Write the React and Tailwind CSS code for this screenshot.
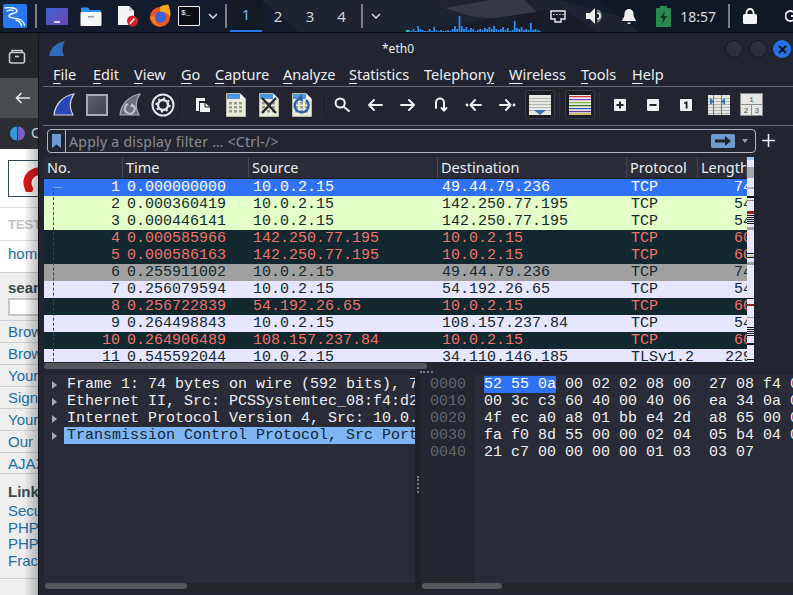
import React from "react";

const UI = { fontFamily: '"Noto Sans", "Open Sans", sans-serif' };

const rows = [
  ["1", "0.000000000", "10.0.2.15", "49.44.79.236", "TCP", "74", "s"],
  ["2", "0.000360419", "10.0.2.15", "142.250.77.195", "TCP", "54", "g"],
  ["3", "0.000446141", "10.0.2.15", "142.250.77.195", "TCP", "54", "g"],
  ["4", "0.000585966", "142.250.77.195", "10.0.2.15", "TCP", "60", "d"],
  ["5", "0.000586163", "142.250.77.195", "10.0.2.15", "TCP", "60", "d"],
  ["6", "0.255911002", "10.0.2.15", "49.44.79.236", "TCP", "74", "m"],
  ["7", "0.256079594", "10.0.2.15", "54.192.26.65", "TCP", "54", "l"],
  ["8", "0.256722839", "54.192.26.65", "10.0.2.15", "TCP", "60", "d"],
  ["9", "0.264498843", "10.0.2.15", "108.157.237.84", "TCP", "54", "l"],
  ["10", "0.264906489", "108.157.237.84", "10.0.2.15", "TCP", "60", "d"],
  ["11", "0.545592044", "10.0.2.15", "34.110.146.185", "TLSv1.2", "229", "l"],
];

const rowClass = {
  s: "bg-[#2f72f3] text-white",
  g: "bg-[#e4ffc7] text-[#12272e]",
  d: "bg-[#12272e] text-[#f0746c]",
  m: "bg-[#a0a0a0] text-[#12272e]",
  l: "bg-[#e7e6ff] text-[#12272e]",
};

const hex = [
  ["0000", "52 55 0a 00 02 02 08 00  27 08 f4 0"],
  ["0010", "00 3c c3 60 40 00 40 06  ea 34 0a 0"],
  ["0020", "4f ec a0 a8 01 bb e4 2d  a8 65 00 0"],
  ["0030", "fa f0 8d 55 00 00 02 04  05 b4 04 0"],
  ["0040", "21 c7 00 00 00 00 01 03  03 07"],
];

const details = [
  "Frame 1: 74 bytes on wire (592 bits), 7",
  "Ethernet II, Src: PCSSystemtec_08:f4:d2",
  "Internet Protocol Version 4, Src: 10.0.",
  "Transmission Control Protocol, Src Port",
];

const sideLinks = ["Brow", "Brow", "Your", "Sign", "Your", "Our g", "AJAX"];

function Fin({ w = 22, h = 23, fill = "#2a46b8", stroke = "#d5d8e0" }) {
  return (
    <svg width={w} height={h} viewBox="0 0 22 23">
      <path d="M1 22C2 12 9 3 21 1C17 7 16 15 20 22Z" fill={fill} stroke={stroke} strokeWidth="1.2" />
    </svg>
  );
}

function FileIcon({ children }) {
  return (
    <svg width="20" height="24" viewBox="0 0 20 24">
      <path d="M0.5 0.5H14L19.5 6V23.5H0.5Z" fill="#e9ecd8" stroke="#b9bba8" />
      <path d="M1 1H14V6H1Z" fill="#4f97dc" />
      <path d="M14 0.5V6H19.5Z" fill="#f4f6f8" />
      {[9, 13, 17].map((y) => (
        <g key={y} fill="#9a9c94">
          <rect x="3" y={y} width="3" height="2.5" />
          <rect x="8" y={y} width="3" height="2.5" />
          <rect x="13" y={y} width="3" height="2.5" />
        </g>
      ))}
      {children}
    </svg>
  );
}

function Arrow({ d, dot }) {
  return (
    <svg width="18" height="14" viewBox="0 0 18 14" fill="none" stroke="#eef0f2" strokeWidth="2" strokeLinecap="round" strokeLinejoin="round">
      <path d={d} />
      {dot && <circle cx={dot} cy="7" r="1.4" fill="#eef0f2" stroke="none" />}
    </svg>
  );
}

function Slot({ children, boxed }) {
  return (
    <div className="w-[33px] h-[33px] shrink-0 flex items-center justify-center">
      {boxed ? (
        <div className="w-[30px] h-[29px] flex items-center justify-center rounded-[3px] border border-[#3a3d47] bg-[#1b1e25]">{children}</div>
      ) : (
        children
      )}
    </div>
  );
}

function Sep() {
  return (
    <div className="w-[7px] h-[33px] shrink-0 flex justify-center items-center">
      <div className="w-px h-[24px] bg-[#2e313a]" />
    </div>
  );
}

function Key({ children }) {
  return (
    <div className="w-[12px] h-[12px] rounded-[1px] bg-[#eef0f2] flex items-center justify-center">
      <svg width="8" height="8" viewBox="0 0 8 8" fill="#20232c">{children}</svg>
    </div>
  );
}

function Menu() {
  const items = [
    ["F", "ile", 40, ""],
    ["E", "dit", 41, ""],
    ["V", "iew", 47, ""],
    ["G", "o", 34, ""],
    ["C", "apture", 68, ""],
    ["A", "nalyze", 66, ""],
    ["S", "tatistics", 75, ""],
    ["Telephon", "y", 85, "rev"],
    ["W", "ireless", 72, ""],
    ["T", "ools", 51, ""],
    ["H", "elp", 40, ""],
  ];
  return (
    <div className="h-[26px] shrink-0 flex items-center pl-[10px] ml-[4px] text-[14.5px] text-[#eceef0] border-b border-[#6a6c74]" style={UI}>
      {items.map(([a, b, w, rev]) => (
        <div key={a + b} className="shrink-0 leading-[20px] whitespace-nowrap" style={{ width: w }}>
          {rev ? (
            <>
              {a}
              <span className="underline underline-offset-[3px]">{b}</span>
            </>
          ) : (
            <>
              <span className="underline underline-offset-[3px]">{a}</span>
              {b}
            </>
          )}
        </div>
      ))}
    </div>
  );
}

function Toolbar() {
  return (
    <div className="h-[39px] shrink-0 flex items-center pl-[4px] ml-[4px] border-b border-[#6a6c74] pb-[3px]">
      <Slot><Fin /></Slot>
      <Slot>
        <div className="w-[22px] h-[22px] border-[2px] border-[#a9acb6] bg-gradient-to-br from-[#5a5d68] to-[#44474f]" />
      </Slot>
      <Slot>
        <svg width="22" height="23" viewBox="0 0 22 23">
          <path d="M1 22C2 12 9 3 21 1C17 7 16 15 20 22Z" fill="#6c6f78" stroke="#a9acb6" strokeWidth="1.2" />
          <path d="M9 11a5 5 0 1 0 6 2" fill="none" stroke="#c4c6cc" strokeWidth="2" />
          <path d="M13 10l3 4h-5z" fill="#c4c6cc" />
        </svg>
      </Slot>
      <Slot>
        <svg width="24" height="24" viewBox="0 0 24 24" fill="none">
          <circle cx="12" cy="12" r="10.5" stroke="#e4e6ea" strokeWidth="2" />
          <circle cx="12" cy="12" r="5" stroke="#e4e6ea" strokeWidth="2.4" />
          <circle cx="12" cy="12" r="6.8" stroke="#e4e6ea" strokeWidth="1.6" strokeDasharray="2.2 3.1" />
        </svg>
      </Slot>
      <Sep />
      <Slot>
        <svg width="16" height="16" viewBox="0 0 16 16">
          <path d="M1 1H10V4H4V14H1Z" fill="#eef0f2" />
          <path d="M5 6H10L15 10V15H5Z" fill="#eef0f2" />
          <path d="M10 6V10H15" fill="none" stroke="#20232c" />
        </svg>
      </Slot>
      <Slot><FileIcon /></Slot>
      <Slot>
        <FileIcon>
          <path d="M3 5L17 20M17 5L3 20" stroke="#25272c" strokeWidth="2.4" />
        </FileIcon>
      </Slot>
      <Slot>
        <FileIcon>
          <path d="M7 6a7 7 0 1 0 7 1" fill="none" stroke="#2c62a8" strokeWidth="2.4" />
          <path d="M10 1L5 6l6 3z" fill="#2c62a8" />
        </FileIcon>
      </Slot>
      <Sep />
      <Slot>
        <svg width="16" height="15" viewBox="0 0 16 15" fill="none" stroke="#eef0f2" strokeWidth="2" strokeLinecap="round">
          <circle cx="6.2" cy="6" r="4.6" />
          <path d="M10 10L15 14" />
        </svg>
      </Slot>
      <Slot><Arrow d="M16 7H3M8 2L3 7L8 12" /></Slot>
      <Slot><Arrow d="M2 7H15M10 2L15 7L10 12" /></Slot>
      <Slot>
        <svg width="14" height="15" viewBox="0 0 14 15" fill="none" stroke="#eef0f2" strokeWidth="2" strokeLinecap="round">
          <path d="M2 11V5.5a4 4 0 0 1 8 0V12" />
          <path d="M7.5 11L10 13.5L12.5 11" />
        </svg>
      </Slot>
      <Slot><Arrow d="M16 7H6M10 2L5.5 7L10 12" dot="2" /></Slot>
      <Slot><Arrow d="M2 7H12M8 2L12.5 7L8 12" dot="16" /></Slot>
      <Slot boxed>
        <svg width="22" height="20" viewBox="0 0 22 20">
          <rect width="22" height="20" fill="#e6e7e3" />
          {[3, 6, 9, 12, 15].map((y) => <rect key={y} y={y} width="22" height="1" fill="#b4b5b0" />)}
          <path d="M5 15H17L11 20Z" fill="#3670b5" />
        </svg>
      </Slot>
      <Sep />
      <Slot boxed>
        <svg width="22" height="20" viewBox="0 0 22 20">
          <rect width="22" height="20" fill="#e6e7e3" />
          <rect y="1" width="22" height="1.2" fill="#d43a3a" />
          <rect y="4" width="22" height="1.2" fill="#8a3ad0" />
          <rect y="7" width="22" height="1.2" fill="#7ac020" />
          <rect y="10" width="22" height="1.2" fill="#3a7a20" />
          <rect y="13" width="22" height="1.2" fill="#3a54c0" />
          <rect y="16" width="22" height="1.2" fill="#6a3aa0" />
          <rect y="18.4" width="22" height="1.2" fill="#d0a020" />
        </svg>
      </Slot>
      <Sep />
      <Slot><Key><path d="M3 0.5H5V3H7.5V5H5V7.5H3V5H0.5V3H3Z" /></Key></Slot>
      <Slot><Key><rect x="0.5" y="3" width="7" height="2" /></Key></Slot>
      <Slot><Key><path d="M2 1.5L4 0.5H5.5V7.5H3.7V2.5L2 3Z" /></Key></Slot>
      <Slot>
        <svg width="22" height="20" viewBox="0 0 22 20">
          <rect width="22" height="20" fill="#e6e7e3" />
          {[3, 6, 9, 12, 15, 18].map((y) => <rect key={y} y={y} width="22" height="1" fill="#b4b5b0" />)}
          <rect x="5" width="1" height="20" fill="#77797c" />
          <rect x="13" width="1" height="20" fill="#77797c" />
          <path d="M2 3L6 6.5L2 10ZM17 3L13 6.5L17 10Z" fill="#3670b5" />
        </svg>
      </Slot>
      <Slot>
        <svg width="23" height="23" viewBox="0 0 23 23">
          <rect x="0.5" y="0.5" width="22" height="22" fill="#e6e7e3" stroke="#8c8e92" />
          <path d="M0 11.5H23M11.5 11.5V23" stroke="#8c8e92" />
          <text x="11.5" y="9" fontSize="8" textAnchor="middle" fill="#55575b" fontFamily="Liberation Mono, monospace">1</text>
          <text x="6" y="20" fontSize="8" textAnchor="middle" fill="#55575b" fontFamily="Liberation Mono, monospace">2</text>
          <text x="17" y="20" fontSize="8" textAnchor="middle" fill="#55575b" fontFamily="Liberation Mono, monospace">3</text>
        </svg>
      </Slot>
    </div>
  );
}

function FilterBar() {
  return (
    <div className="h-[31px] shrink-0 flex items-start pl-[8px] pt-[3px]" style={UI}>
      <div className="w-[709px] h-[24px] border border-[#b4b6bc] rounded-[4px] flex items-center">
        <div className="w-[18px] h-full border-r border-[#b4b6bc] flex items-center justify-center">
          <svg width="9" height="14" viewBox="0 0 9 14"><path d="M0 0H9V14L4.5 10.5L0 14Z" fill="#6f9bd0" /></svg>
        </div>
        <div className="flex-1 pl-[3px] text-[14px] text-[#8a8c92] tracking-[0.3px] whitespace-nowrap">Apply a display filter … &lt;Ctrl-/&gt;</div>
        <div className="w-[24px] h-[14px] rounded-[2px] bg-[#6f9bd0] flex items-center justify-center">
          <svg width="16" height="10" viewBox="0 0 16 10"><path d="M0 3.5H10V0L16 5L10 10V6.5H0Z" fill="#20242e" /></svg>
        </div>
        <div className="w-[20px] flex justify-center">
          <div className="w-0 h-0 border-x-[3px] border-x-transparent border-t-[4px] border-t-[#9a9ca2]" />
        </div>
      </div>
      <svg className="ml-[6px] mt-[5px]" width="13" height="13" viewBox="0 0 13 13"><path d="M6.5 0V13M0 6.5H13" stroke="#e8eaee" strokeWidth="1.6" /></svg>
    </div>
  );
}

const Cols = "grid grid-cols-[79px_126px_189px_189px_71px_49px]";

function PacketTable() {
  const marks = [
    [0, 3, "#9cc6ee"], [10, 11, "#a8a8a8"], [30, 2, "#b5b5c0"], [39, 2, "#101010"], [43, 1, "#8a8a8a"],
    [54, 3, "#a02020"], [58, 1, "#101010"], [60, 1, "#101010"], [62, 1, "#101010"], [64, 1, "#101010"],
    [66, 1, "#101010"], [70, 3, "#a0a0a0"], [96, 1, "#101010"], [98, 2, "#c8d8a0"], [100, 1, "#101010"],
    [105, 3, "#a0a0a0"], [141, 1, "#101010"], [147, 2, "#a02020"], [160, 1, "#a0a0a0"], [170, 1, "#101010"],
    [172, 1, "#101010"], [174, 1, "#101010"], [176, 1, "#101010"], [178, 1, "#101010"], [186, 2, "#101010"],
    [202, 1, "#101010"],
  ];
  return (
    <div className="flex h-[205px] shrink-0 ml-[5px]">
      <div className="w-[703px] overflow-hidden shrink-0">
        <div className={`${Cols} h-[22px] bg-[#2a2d37] text-[14.5px] text-[#eceef0] border-b border-[#1a1c22]`} style={UI}>
          {["No.", "Time", "Source", "Destination", "Protocol", "Length"].map((h) => (
            <div key={h} className="pl-[3px] leading-[21px] border-r border-[#454852] overflow-hidden whitespace-nowrap">{h}</div>
          ))}
        </div>
        <div className="relative text-[15px] leading-[17px]" style={{ fontFamily: '"Liberation Mono", monospace' }}>
          {rows.map((r) => (
            <div key={r[0]} className={`${Cols} h-[17px] whitespace-pre ${rowClass[r[6]]}`}>
              <div className="text-right pr-[3px]">{r[0]}</div>
              <div className="pl-[4px]">{r[1]}</div>
              <div className="pl-[4px]">{r[2]}</div>
              <div className="pl-[4px]">{r[3]}</div>
              <div className="pl-[4px]">{r[4]}</div>
              <div className="overflow-hidden flex justify-end"><span className="-mr-[5px]">{r[5]}</span></div>
            </div>
          ))}
          <div className="absolute left-[9px] top-[8px] bottom-0 w-px border-l border-dashed border-[#444]" />
          <div className="absolute left-[9px] top-[8px] w-[9px] h-px bg-[#8a9cc0]" />
        </div>
      </div>
      <div className="relative w-[7px] shrink-0 bg-[#e7e6ff] overflow-hidden">
        {marks.map(([y, h, c], i) => (
          <div key={i} className="absolute left-0 w-full" style={{ top: y, height: h, backgroundColor: c }} />
        ))}
      </div>
    </div>
  );
}

function Panes() {
  const mono = { fontFamily: '"Liberation Mono", monospace' };
  return (
    <div className="flex-1 flex flex-col min-h-0 pb-[5px]">
      <div className="h-[13px] shrink-0 relative mx-[5px] pt-[1px]">
        <div className="w-[383px] h-[6px] rounded-[3px] bg-[#55575d]" />
        <div className="absolute left-[376px] top-[9px] w-[13px] border-t-2 border-dotted border-[#7a7c82]" />
      </div>
      <div className="flex-1 flex min-h-0 ml-[5px] bg-[#292b36] text-[15px] leading-[17px] text-[#eef0f2]" style={mono}>
        <div className="w-[371px] shrink-0 flex flex-col overflow-hidden">
          <div className="flex-1 flex min-h-0">
            <div className="w-[20px] shrink-0 flex flex-col pt-[1px]">
              {details.map((d) => (
                <div key={d} className="h-[17px] flex items-center justify-center pl-[1px]">
                  <div className="w-0 h-0 border-y-[4px] border-y-transparent border-l-[5px] border-l-[#a8aab0]" />
                </div>
              ))}
            </div>
            <div className="flex-1 overflow-hidden pt-[1px]">
              {details.map((d, i) => (
                <div key={d} className={`h-[17px] pl-[3px] whitespace-pre ${i === 3 ? "bg-[#7fb5f5] text-[#12272e]" : ""}`}>{d}</div>
              ))}
            </div>
          </div>
          <div className="h-[7px] shrink-0 bg-[#23252d]">
            <div className="h-[6px] ml-[1px] w-[142px] rounded-[3px] bg-[#55575d]" />
          </div>
        </div>
        <div className="w-[5px] shrink-0 bg-[#1f2128] pt-[101px] flex justify-center">
          <div className="h-[17px] border-l-2 border-dotted border-[#7a7c82]" />
        </div>
        <div className="flex-1 flex flex-col overflow-hidden min-w-0">
          <div className="flex-1 flex min-h-0">
            <div className="w-[55px] shrink-0 bg-[#23262f] pl-[10px] pt-[1px] text-[#62646b]">
              {hex.map(([o]) => <div key={o} className="h-[17px]">{o}</div>)}
            </div>
            <div className="flex-1 pl-[9px] pt-[1px] whitespace-pre overflow-hidden">
              {hex.map(([o, h], i) => (
                <div key={o} className="h-[17px]">
                  {i === 0 ? (
                    <>
                      <span className="inline-block h-[17px] bg-[#2f72f3] text-white">52 55 0a</span>
                      {h.slice(8)}
                    </>
                  ) : h}
                </div>
              ))}
            </div>
          </div>
          <div className="h-[7px] shrink-0 bg-[#23252d]">
            <div className="h-[6px] ml-[2px] w-[80px] rounded-[3px] bg-[#55575d]" />
          </div>
        </div>
      </div>
    </div>
  );
}

function Browser() {
  const sans = { fontFamily: '"Liberation Sans", sans-serif' };
  return (
    <div className="w-[38px] shrink-0 flex flex-col overflow-hidden bg-[#eeeeee] relative text-[15px] text-[#1c6ea4] whitespace-nowrap" style={sans}>
      <div className="h-[45px] bg-[#23252b] flex items-center justify-center pr-[4px] shrink-0">
        <svg width="18" height="16" viewBox="0 0 18 16" fill="none" stroke="#c9cbd0" strokeWidth="1.6">
          <path d="M4 4V2.5h10V4" />
          <rect x="1.5" y="4.5" width="15" height="10.5" rx="2" />
          <path d="M7 8.5H11" />
        </svg>
      </div>
      <div className="h-[40px] bg-[#494b50] pl-[15px] flex items-center shrink-0">
        <svg width="15" height="12" viewBox="0 0 15 12" fill="none" stroke="#e8e9ec" strokeWidth="1.6"><path d="M15 6H1.5M6.5 1L1.5 6L6.5 11" /></svg>
      </div>
      <div className="h-[31px] bg-[#2b2d33] pl-[10px] flex items-center gap-[6px] text-[#c5c7cc] shrink-0">
        <svg width="15" height="15" viewBox="0 0 15 15" className="shrink-0">
          <path d="M7 0.5A7 7 0 0 0 7 14.5Z" fill="#2e9bd8" />
          <path d="M8 0.5A7 7 0 0 1 8 14.5Z" fill="#7a5fc8" />
        </svg>
        <span>C</span>
      </div>
      <div className="bg-white shrink-0 h-[123px] pl-[8px] pt-[11px]">
        <div className="w-[60px] h-[37px] border border-[#2f4a55] flex items-center pl-[14px]">
          <svg width="22" height="26" viewBox="0 0 22 26" fill="none" className="shrink-0">
            <path d="M6 23C1 12 9 4 21 5" stroke="#d81a1a" strokeWidth="8" strokeLinecap="round" />
          </svg>
        </div>
        <div className="-ml-[8px] mt-[10px] border-t border-[#dddddd]" />
        <div className="font-bold text-[#c4c4c4] text-[13px] mt-[9px] leading-[16px]">TEST</div>
        <div className="-ml-[8px] mt-[7px] border-t border-[#dddddd]" />
        <div className="mt-[3px] leading-[20px]">home</div>
      </div>
      <div className="border-t border-[#cfcfcf] pl-[8px] pt-[6px] shrink-0">
        <div className="font-bold text-[#3a4a50] leading-[18px]">sear</div>
        <div className="mt-[1px] w-[50px] h-[18px] border-2 border-[#c8c8c8] bg-white" />
      </div>
      <div className="mt-[4px] shrink-0">
        {sideLinks.map((t, i) => (
          <div key={i} className="h-[22px] border-t border-[#cfcfcf] pl-[8px] leading-[22px]">{t}</div>
        ))}
      </div>
      <div className="border-t border-[#cfcfcf] -mt-[1px] pl-[8px] pt-[9px] shrink-0">
        <div className="font-bold text-[#3a4a50] leading-[18px]">Link</div>
        <div className="mt-[1px] leading-[17px]">Secu</div>
        <div className="leading-[17px]">PHP</div>
        <div className="leading-[16px]">PHP</div>
        <div className="leading-[17px]">Frac</div>
      </div>
      <div className="mt-[9px] border-t border-[#cfcfcf]" />
      <div className="absolute right-0 top-[116px] bottom-0 w-[14px] bg-gradient-to-r from-transparent to-[#00000040]" />
    </div>
  );
}

function TopBar() {
  const graph = [2,1,3,1,6,3,2,1,1,3,1,5,2,1,2,1,1,2,1,3,6,3,16,6,3,5,2,4,3,1,2,3,2,4,3,5,3,6,3,2,3,5,2,4,1,2,11,4,3,5,2,3,2,9,2,3,2,1];
  return (
    <div className="relative h-[33px] shrink-0 flex items-center overflow-hidden bg-[#0f1a29] border-b border-[#0b0c10]" style={UI}>
      <svg className="absolute left-0 top-0" width="793" height="33" viewBox="0 0 793 33">
        <path d="M0 0H793V33H0Z" fill="#121c2c" />
        <path d="M262 0H560L680 33H300Z" fill="#1c2431" />
        <path d="M445 8L490 0H525L548 24L505 20L470 16Z" fill="#343a45" />
        <path d="M400 33L560 8L600 33Z" fill="#171e2a" />
        <path d="M600 0H793V33H640Z" fill="#0f1825" />
        {graph.map((h, i) => <rect key={i} x={408 + i * 2.3} y={32 - h} width="1.8" height={h} fill="#2f8ff0" />)}
        <rect x="406" y="30" width="3" height="2" fill="#22c7b0" />
      </svg>
      <div className="relative flex items-center w-full h-full pl-[3px]">
        <div className="w-[24px] h-[24px] rounded-[2px] bg-[#2777ee] flex items-center justify-center shrink-0">
          <svg width="24" height="24" viewBox="0 0 24 24" fill="none" stroke="#fff" strokeWidth="1.3" strokeLinecap="round">
            <path d="M2 4C7 3 14 4 14 7C14 10 6 9 6 12C6 15 14 13 18 16C20 17.5 21 19 21.5 21" />
            <path d="M13 16C17 17 18 19 18.5 22" />
            <path d="M4 7C6 6 8 6 10 6.5" />
          </svg>
        </div>
        <div className="ml-[8px] w-[2px] h-[24px] bg-[#7b7e84] shrink-0" />
        <div className="ml-[9px] w-[22px] h-[17px] rounded-[1px] bg-gradient-to-br from-[#3b63d8] to-[#6a44b0] flex items-end justify-center pb-[2px] shrink-0">
          <div className="w-[6px] h-[2px] bg-[#d0d4f0]" />
        </div>
        <svg className="ml-[12px] shrink-0" width="22" height="19" viewBox="0 0 22 19">
          <path d="M1 4V1.5A1 1 0 0 1 2 .5H8L10 3H20A1 1 0 0 1 21 4V6H1Z" fill="#2e8fe8" />
          <rect x="0.5" y="5" width="21" height="14" rx="1" fill="#f4f5f7" />
          <rect x="8" y="9" width="6" height="1.5" fill="#9a9ca2" />
        </svg>
        <svg className="ml-[15px] shrink-0" width="22" height="22" viewBox="0 0 22 22">
          <path d="M1 1H12L17 6V20H1Z" fill="#f4f5f7" />
          <path d="M12 1V6H17Z" fill="#c8cacd" />
          <circle cx="15.5" cy="16" r="5.5" fill="#d3222a" />
          <path d="M13 18.5L17.5 13.5" stroke="#fff" strokeWidth="1.6" />
        </svg>
        <svg className="ml-[10px] shrink-0" width="22" height="24" viewBox="0 0 22 24">
          <circle cx="11" cy="13" r="10" fill="#e8551f" />
          <path d="M11 3C15 0 18 2 19 0C21 5 22 9 21 13C19 9 15 7 11 8Z" fill="#f9a61e" />
          <circle cx="11.5" cy="13" r="5.5" fill="#3a64d8" />
          <path d="M1 13C2 19 8 23 13 22C8 21 5 17 6 12Z" fill="#f6801e" />
        </svg>
        <div className="ml-[7px] w-[22px] h-[20px] border border-[#e8eaee] rounded-[1px] bg-[#0b0d12] text-[8px] leading-[10px] text-white pl-[2px] pt-[1px] shrink-0" style={{ fontFamily: '"Liberation Mono", monospace' }}>$_</div>
        <svg className="ml-[8px] shrink-0" width="10" height="6" viewBox="0 0 10 6" fill="none" stroke="#d5d7dc" strokeWidth="1.6"><path d="M1 1L5 5L9 1" /></svg>
        <div className="ml-[7px] w-[2px] h-[24px] bg-[#7b7e84] shrink-0" />
        <div className="ml-[3px] flex text-[15px] text-[#d0d3d8] shrink-0">
          <div className="w-[32px] h-[33px] bg-[#141a24] border-b-[3px] border-[#2777ee] flex items-center justify-center text-[#7fb0f0]">1</div>
          <div className="w-[32px] flex items-center justify-center">2</div>
          <div className="w-[32px] flex items-center justify-center">3</div>
          <div className="w-[31px] flex items-center justify-center">4</div>
        </div>
        <div className="ml-[4px] w-[2px] h-[24px] bg-[#7b7e84] shrink-0" />
        <svg className="ml-[8px] shrink-0" width="10" height="6" viewBox="0 0 10 6" fill="none" stroke="#d5d7dc" strokeWidth="1.6"><path d="M1 1L5 5L9 1" /></svg>
        <div className="flex-1" />
        <svg className="shrink-0 mr-[20px]" width="16" height="13" viewBox="0 0 16 13" fill="none" stroke="#eceef0" strokeWidth="1.4">
          <path d="M1 1H15V9H11V12H5V9H1Z" />
          <path d="M4 4V5M7 4V5M10 4V5M13 4V5" />
        </svg>
        <svg className="shrink-0 mr-[18px]" width="18" height="16" viewBox="0 0 18 16">
          <path d="M0 5H4L9 0V16L4 11H0Z" fill="#eceef0" />
          <path d="M11 2A6.5 6.5 0 0 1 11 14" fill="none" stroke="#8a8c92" strokeWidth="1.6" />
          <path d="M11 5A3 3 0 0 1 11 11" fill="none" stroke="#eceef0" strokeWidth="1.6" />
        </svg>
        <svg className="shrink-0 mr-[20px]" width="14" height="15" viewBox="0 0 14 15">
          <path d="M7 0C10 0 11.5 2.5 11.5 5C11.5 9 14 10 14 12H0C0 10 2.5 9 2.5 5C2.5 2.5 4 0 7 0Z" fill="#eceef0" />
          <path d="M5 13.5H9L8 15H6Z" fill="#eceef0" />
        </svg>
        <svg className="shrink-0 mr-[9px]" width="15" height="21" viewBox="0 0 15 21">
          <rect x="4" y="0" width="7" height="2" fill="#2b8a50" />
          <rect y="2" width="15" height="19" rx="1" fill="#2b8a50" />
          <path d="M9 5L4 12H7L6 18L11 10H8Z" fill="#14331f" />
        </svg>
        <div className="shrink-0 mr-[12px] text-[14px] text-[#d8dade]">18:57</div>
        <div className="shrink-0 w-[2px] h-[24px] bg-[#7b7e84] mr-[13px]" />
        <svg className="shrink-0 mr-[28px]" width="14" height="16" viewBox="0 0 14 16">
          <rect y="6" width="14" height="10" rx="1.5" fill="#f4f5f7" />
          <path d="M3.5 7V4.5a3.5 3.5 0 0 1 7 0V7" fill="none" stroke="#f4f5f7" strokeWidth="1.8" />
        </svg>
        <svg className="shrink-0 -mr-[7px]" width="15" height="14" viewBox="0 0 15 14" fill="none" stroke="#eceef0" strokeWidth="1.8">
          <path d="M9 3.5A5 5 0 1 0 9 10.5" />
          <path d="M6 7H14M11 4L14 7L11 10" />
        </svg>
      </div>
    </div>
  );
}

export default function App() {
  return (
    <div className="w-[793px] h-[595px] overflow-hidden flex flex-col bg-[#0f1a29]">
      <TopBar />
      <div className="flex-1 flex min-h-0">
        <Browser />
        <div className="flex-1 min-w-0 flex flex-col bg-[#22252f] border-l border-[#14161b] rounded-tl-[4px]">
          <div className="h-[28px] shrink-0 relative flex items-center justify-center pt-[3px] text-[12px] text-[#eceef0]" style={UI}>
            <div className="absolute left-[10px] top-[8px]">
              <svg width="17" height="16" viewBox="0 0 17 16">
                <path d="M0 15C1 8 6 2 16 0C13 5 13 10 15 15Z" fill="#2f6cc0" />
              </svg>
            </div>
            <span className="-ml-[36px]">*eth0</span>
            <div className="absolute right-[2px] top-[7px] flex gap-[6px]">
              <div className="w-[18px] h-[18px] rounded-full bg-[#2c2f39] border border-[#14161b]" />
              <div className="w-[18px] h-[18px] rounded-full bg-[#2c2f39] border border-[#14161b]" />
              <div className="w-[18px] h-[18px] rounded-full bg-[#2470e8] flex items-center justify-center">
                <svg width="9" height="9" viewBox="0 0 9 9" stroke="#0f1420" strokeWidth="2.2"><path d="M1 1L8 8M8 1L1 8" /></svg>
              </div>
            </div>
          </div>
          <Menu />
          <Toolbar />
          <FilterBar />
          <PacketTable />
          <Panes />
        </div>
      </div>
    </div>
  );
}
